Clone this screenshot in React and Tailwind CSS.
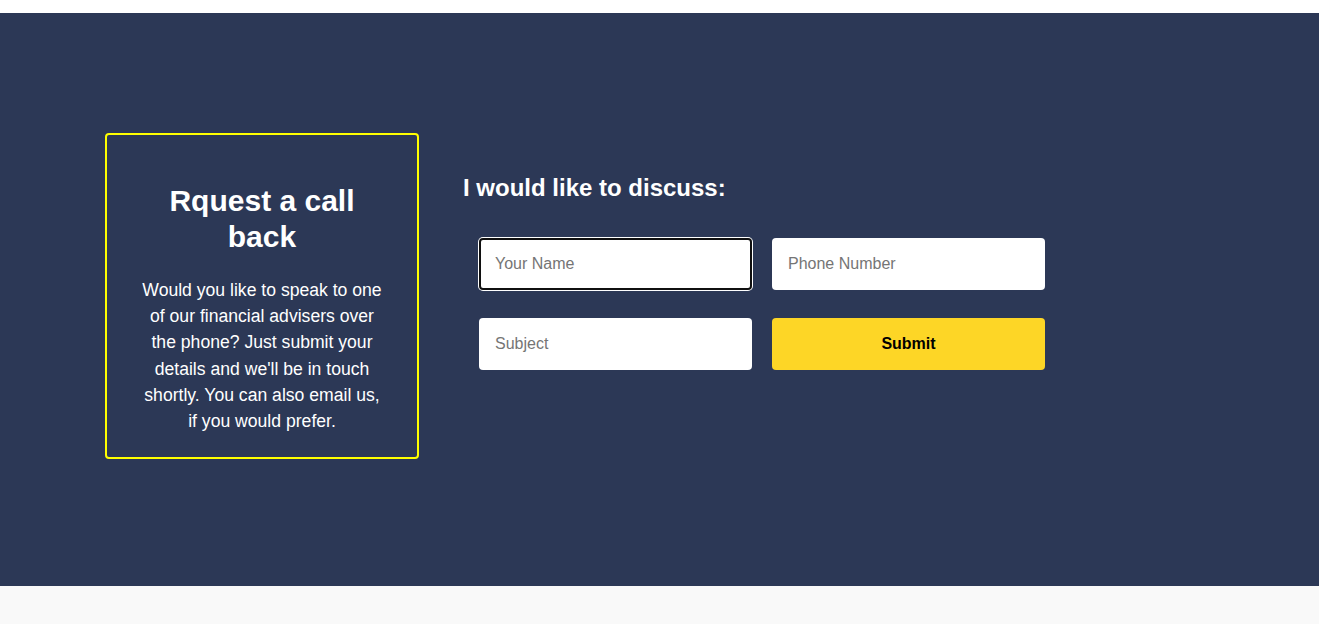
export default function App() {
  return (
    <div className="min-h-screen bg-[#f9f9f9] font-['Liberation_Sans',Arial,sans-serif]">
      <div className="h-[13px] bg-white"></div>
      <section className="h-[573px] bg-[#2c3856] flex items-start pt-[120px] pl-[105px]">
        <div className="w-[314px] h-[326px] border-2 border-[#ffff00] rounded-[4px] px-[33px] pt-[48px] text-center text-white">
          <h2 className="text-[30px] leading-[36px] font-bold">Rquest a call back</h2>
          <p className="mt-[22px] text-[17.6px] leading-[26.2px]">
            Would you like to speak to one of our financial advisers over the phone? Just submit your details and we'll be in touch shortly. You can also email us, if you would prefer.
          </p>
        </div>
        <div className="ml-[44px] pt-[40px]">
          <h3 className="text-[24px] leading-[29px] font-bold text-white">I would like to discuss:</h3>
          <form className="mt-[36px] pl-[16px] grid grid-cols-[273px_273px] gap-x-[20px] gap-y-[28px]">
            <input
              type="text"
              placeholder="Your Name"
              className="h-[52px] bg-white rounded-[4px] px-[14px] text-[16px] text-black placeholder:text-[#757575] border-2 border-[#101010] shadow-[0_0_0_1px_#ffffff] outline-none"
            />
            <input
              type="text"
              placeholder="Phone Number"
              className="h-[52px] bg-white rounded-[4px] px-[16px] text-[16px] text-black placeholder:text-[#757575] outline-none"
            />
            <input
              type="text"
              placeholder="Subject"
              className="h-[52px] bg-white rounded-[4px] px-[16px] text-[16px] text-black placeholder:text-[#757575] outline-none"
            />
            <button
              type="button"
              className="h-[52px] bg-[#fdd626] rounded-[4px] text-[16px] font-bold text-black"
            >
              Submit
            </button>
          </form>
        </div>
      </section>
    </div>
  );
}
